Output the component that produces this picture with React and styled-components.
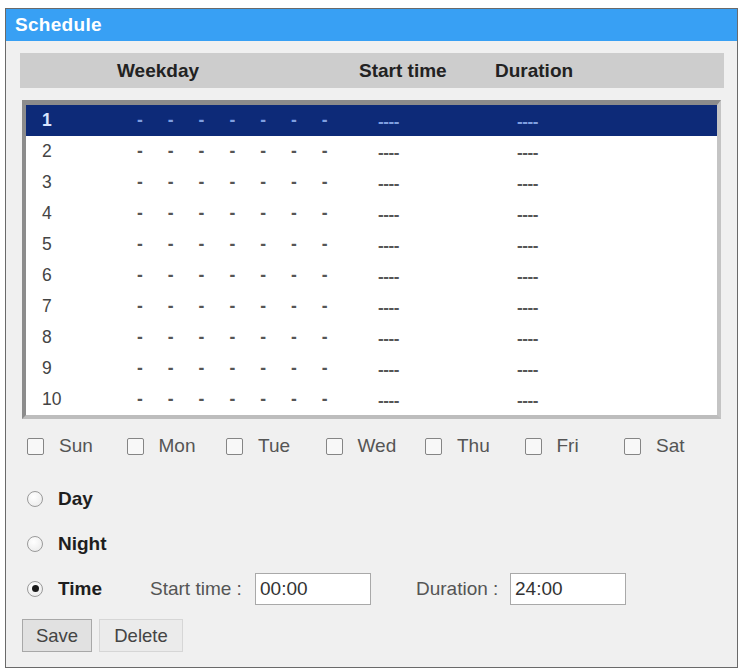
import React from "react";
import styled, { createGlobalStyle } from "styled-components";

const Global = createGlobalStyle`
  html, body { margin: 0; padding: 0; background: #ffffff; }
  body { font-family: "Liberation Sans", Arial, sans-serif; }
  * { box-sizing: border-box; }
`;

const Page = styled.div`
  width: 742px;
  height: 668px;
  padding: 8px 4px 0 5px;
  background: #ffffff;
`;

const Panel = styled.div`
  width: 733px;
  height: 660px;
  border: 1px solid #6a6a6a;
  background: #f0f0f0;
  display: flex;
  flex-direction: column;
`;

const TitleBar = styled.div`
  height: 32px;
  background: #38a0f4;
  color: #ffffff;
  font-weight: bold;
  font-size: 19px;
  display: flex;
  align-items: center;
  padding-left: 9px;
  letter-spacing: 0.3px;
`;

const Body = styled.div`
  padding: 12px 13px 0 14px;
  display: flex;
  flex-direction: column;
`;

const HeaderBar = styled.div`
  height: 35px;
  background: #cdcdcd;
  display: grid;
  grid-template-columns: 97px 242px 136px 1fr;
  align-items: center;
  font-weight: bold;
  font-size: 19px;
  color: #222;
`;

const ListBox = styled.div`
  margin: 12px 3px 0 2px;
  border-style: solid;
  border-width: 5px 4px 4px 4px;
  border-color: #8c8c8c #c4c4c4 #bdbdbd #8c8c8c;
  background: #ffffff;
  display: flex;
  flex-direction: column;
`;

const Row = styled.div`
  height: 31px;
  display: grid;
  grid-template-columns: 111px 241px 139px 1fr;
  align-items: center;
  font-size: 17.5px;
  color: ${(p) => (p.$selected ? "#d8e4ff" : "#444")};
  background: ${(p) => (p.$selected ? "#0d2a78" : "#ffffff")};
  font-weight: ${(p) => (p.$selected ? "bold" : "normal")};
`;

const Num = styled.span`
  padding-left: 16px;
`;

const Dashes = styled.div`
  display: flex;
`;

const Dash = styled.span`
  width: 30.8px;
  color: ${(p) => (p.$selected ? "#7f9fe0" : "#555")};
  font-weight: bold;
`;

const TimeDash = styled.span`
  color: ${(p) => (p.$selected ? "#7f9fe0" : "#555")};
  font-size: 17px;
  letter-spacing: -0.4px;
  font-weight: bold;
  padding-top: 3px;
`;

const CheckRow = styled.div`
  margin-top: 13px;
  height: 28px;
  padding-left: 7px;
  display: grid;
  grid-template-columns: repeat(7, 99.5px);
  align-items: center;
`;

const CheckItem = styled.label`
  display: flex;
  align-items: center;
  gap: 15px;
  font-size: 19px;
  color: #555;
`;

const Box = styled.span`
  width: 17px;
  height: 17px;
  border: 1px solid #858585;
  border-radius: 2px;
  background: #f8f8f8;
  flex: none;
`;

const RadioList = styled.div`
  margin-top: 16px;
  display: flex;
  flex-direction: column;
`;

const RadioRow = styled.div`
  height: 45px;
  padding-left: 7px;
  display: flex;
  align-items: center;
`;

const Radio = styled.span`
  width: 16px;
  height: 16px;
  border-radius: 50%;
  border: 1px solid #9a9a9a;
  background: radial-gradient(circle at 40% 35%, #ffffff 0%, #e8e8e8 100%);
  display: flex;
  align-items: center;
  justify-content: center;
  flex: none;
  &::after {
    content: "";
    width: 7px;
    height: 7px;
    border-radius: 50%;
    background: ${(p) => (p.$checked ? "#1a1a1a" : "transparent")};
  }
`;

const RadioLabel = styled.span`
  margin-left: 15px;
  font-weight: bold;
  font-size: 19px;
  color: #1e1e1e;
  width: ${(p) => p.$width || "auto"};
`;

const FieldLabel = styled.span`
  font-size: 19px;
  color: #555;
  width: ${(p) => p.$width};
  margin-left: ${(p) => p.$offset || "0px"};
`;

const TextInput = styled.input`
  width: 116px;
  height: 32px;
  border: 1px solid #a9a9a9;
  background: #ffffff;
  font-family: "Liberation Sans", Arial, sans-serif;
  font-size: 19px;
  color: #333;
  padding: 0 4px;
  outline: none;
`;

const ButtonRow = styled.div`
  margin-top: 8px;
  margin-left: 2px;
  display: flex;
  gap: 7px;
`;

const Button = styled.button`
  height: 33px;
  width: ${(p) => p.$width};
  font-family: "Liberation Sans", Arial, sans-serif;
  font-size: 18.5px;
  color: #444;
  background: ${(p) => (p.$primary ? "#e1e1e1" : "#ebebeb")};
  border: 1px solid ${(p) => (p.$primary ? "#a8a8a8" : "#d6d6d6")};
  padding: 0;
`;

const days = ["Sun", "Mon", "Tue", "Wed", "Thu", "Fri", "Sat"];

export default function App() {
  const rows = Array.from({ length: 10 }, (_, i) => i + 1);
  return (
    <Page>
      <Global />
      <Panel>
        <TitleBar>Schedule</TitleBar>
        <Body>
          <HeaderBar>
            <span />
            <span>Weekday</span>
            <span>Start time</span>
            <span>Duration</span>
          </HeaderBar>
          <ListBox>
            {rows.map((n) => {
              const sel = n === 1;
              return (
                <Row key={n} $selected={sel}>
                  <Num>{n}</Num>
                  <Dashes>
                    {days.map((d) => (
                      <Dash key={d} $selected={sel}>-</Dash>
                    ))}
                  </Dashes>
                  <TimeDash $selected={sel}>----</TimeDash>
                  <TimeDash $selected={sel}>----</TimeDash>
                </Row>
              );
            })}
          </ListBox>
          <CheckRow>
            {days.map((d) => (
              <CheckItem key={d}>
                <Box />
                {d}
              </CheckItem>
            ))}
          </CheckRow>
          <RadioList>
            <RadioRow>
              <Radio />
              <RadioLabel>Day</RadioLabel>
            </RadioRow>
            <RadioRow>
              <Radio />
              <RadioLabel>Night</RadioLabel>
            </RadioRow>
            <RadioRow>
              <Radio $checked />
              <RadioLabel $width="92px">Time</RadioLabel>
              <FieldLabel $width="105px">Start time :</FieldLabel>
              <TextInput defaultValue="00:00" readOnly />
              <FieldLabel $width="94px" $offset="45px">Duration :</FieldLabel>
              <TextInput defaultValue="24:00" readOnly />
            </RadioRow>
          </RadioList>
          <ButtonRow>
            <Button $primary $width="70px">Save</Button>
            <Button $width="84px">Delete</Button>
          </ButtonRow>
        </Body>
      </Panel>
    </Page>
  );
}
